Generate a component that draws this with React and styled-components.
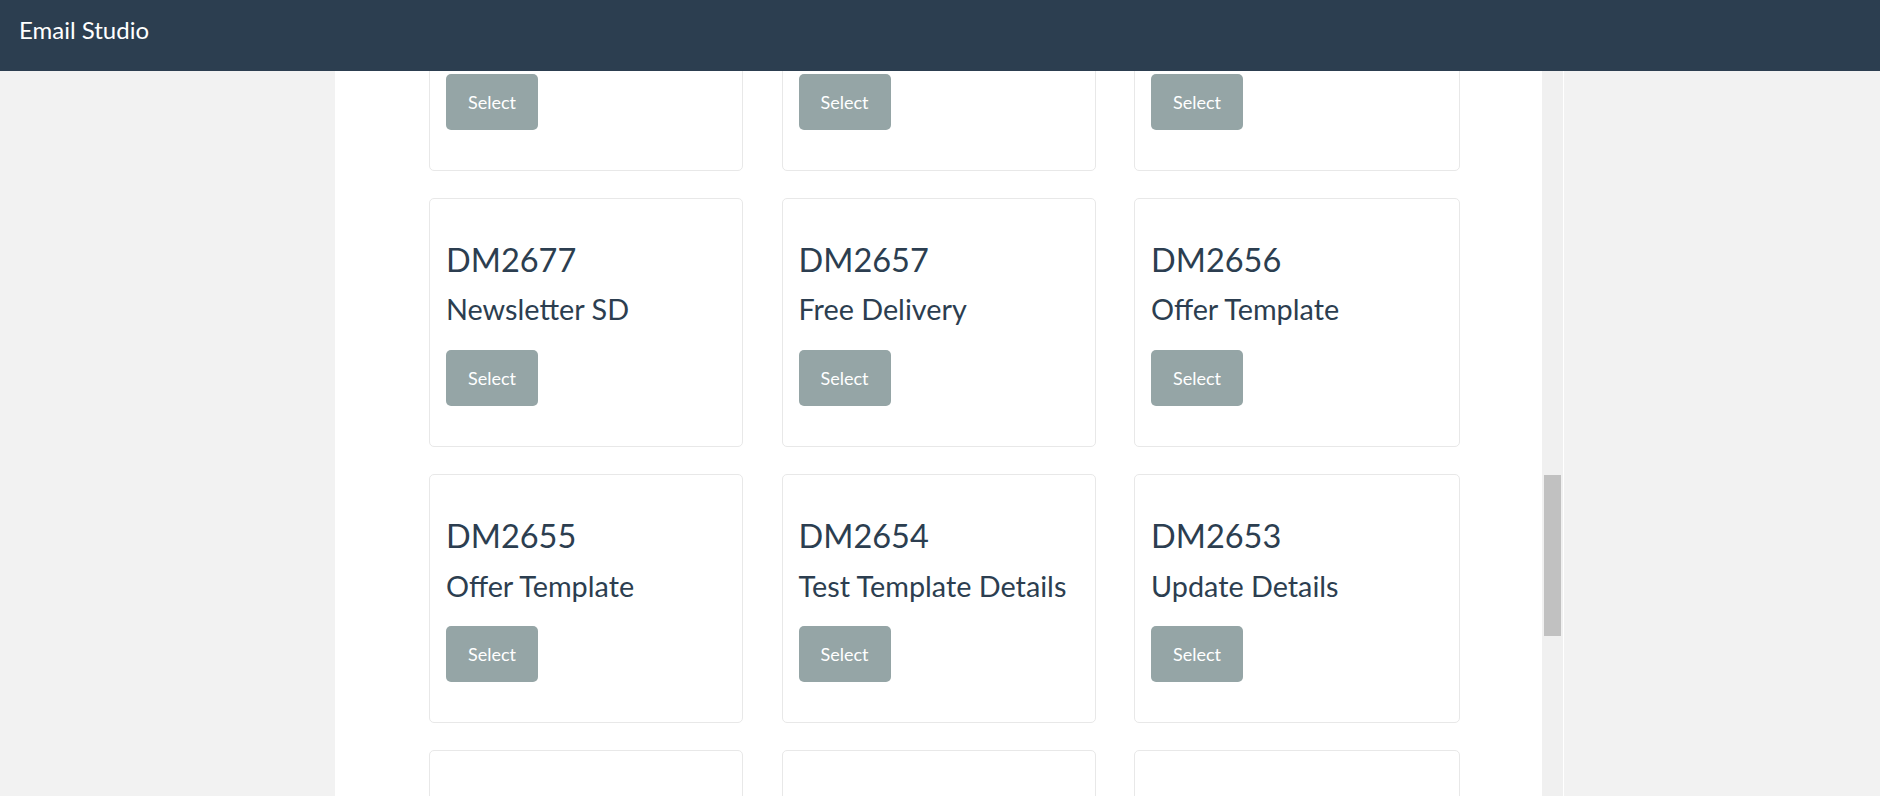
import React, { useLayoutEffect, useRef, useState } from 'react'
import styled, { createGlobalStyle } from 'styled-components'

const templates = [
  ['DM2740', 'Spring Sale'],
  ['DM2738', 'Welcome Email'],
  ['DM2735', 'Order Confirmation'],
  ['DM2731', 'Newsletter June'],
  ['DM2729', 'Abandoned Cart'],
  ['DM2724', 'Product Launch'],
  ['DM2720', 'Event Invite'],
  ['DM2716', 'Feedback Request'],
  ['DM2712', 'Loyalty Points'],
  ['DM2709', 'Summer Offer'],
  ['DM2705', 'Reminder'],
  ['DM2701', 'Newsletter May'],
  ['DM2698', 'Price Drop'],
  ['DM2695', 'Birthday Offer'],
  ['DM2692', 'Thank You'],
  ['DM2689', 'Re-engagement'],
  ['DM2686', 'Weekly Digest'],
  ['DM2683', 'Flash Sale'],
  ['DM2681', 'Newsletter April'],
  ['DM2680', 'Offer Template'],
  ['DM2678', 'Free Delivery'],
  ['DM2677', 'Newsletter SD'],
  ['DM2657', 'Free Delivery'],
  ['DM2656', 'Offer Template'],
  ['DM2655', 'Offer Template'],
  ['DM2654', 'Test Template Details'],
  ['DM2653', 'Update Details'],
  ['DM2652', 'Offer Template'],
  ['DM2651', 'Newsletter SD'],
  ['DM2650', 'Welcome Email'],
  ['DM2649', 'Test Template'],
  ['DM2648', 'Free Delivery'],
  ['DM2647', 'Offer Template']
]

const GlobalStyle = createGlobalStyle`
  html, body {
    margin: 0;
    padding: 0;
    height: 100%;
    overflow: hidden;
    background: #f2f2f2;
    font-family: Lato, "Open Sans", "Liberation Sans", sans-serif;
  }
`

const Page = styled.div`
  display: flex;
  flex-direction: column;
  height: 100vh;
`

const Header = styled.header`
  flex: 0 0 71px;
  box-sizing: border-box;
  background: #2c3e50;
  padding: 16px 19px 0;

  h1 {
    margin: 0;
    color: #fff;
    font-size: 24px;
    font-weight: 400;
    line-height: 28.8px;
  }
`

const Main = styled.main`
  flex: 1;
  min-height: 0;
  display: flex;
  padding-left: 335px;
`

const Panel = styled.section`
  display: flex;
  width: 1229px;
  box-sizing: border-box;
  height: 100%;
  background: #fff;
  border-right: 1px solid #fff;
`

const ScrollArea = styled.div`
  flex: 1;
  height: 100%;
  overflow-y: auto;
  scrollbar-width: none;

  &::-webkit-scrollbar {
    display: none;
  }
`

const ScrollTrack = styled.div`
  position: relative;
  flex: 0 0 21px;
  background: #f0f0f0;
`

const ScrollThumb = styled.div`
  position: absolute;
  left: 2px;
  right: 2px;
  background: #c1c1c1;
`

const Grid = styled.div`
  display: grid;
  grid-template-columns: 314px 314px 326px;
  column-gap: 38.5px;
  row-gap: 27px;
  padding: 13px 0 240px 94px;
`

const Card = styled.div`
  box-sizing: border-box;
  border: 1px solid #e8e8e8;
  border-radius: 5px;
  padding: 41px 16px 40px;
  color: #2c3e50;
`

const Code = styled.h2`
  margin: 0 0 15px;
  font-size: 32.5px;
  font-weight: 400;
  line-height: 39.6px;
`

const Name = styled.h3`
  margin: 0 0 24px;
  font-size: 28.8px;
  font-weight: 400;
  line-height: 1.1;
  white-space: nowrap;
`

const SelectButton = styled.button`
  display: inline-flex;
  align-items: center;
  justify-content: center;
  height: 56px;
  padding: 0 22px;
  border: 0;
  border-radius: 5px;
  background: #95a5a6;
  color: #fff;
  font-family: inherit;
  font-size: 18px;
  cursor: pointer;
`

export default function App () {
  const scrollRef = useRef(null)
  const [thumb, setThumb] = useState({ top: 0, height: 0 })

  const updateThumb = () => {
    const el = scrollRef.current
    if (!el) return
    const track = el.clientHeight
    const height = (track * track) / el.scrollHeight
    const range = el.scrollHeight - track
    const top = range > 0 ? (el.scrollTop / range) * (track - height) : 0
    setThumb({ top, height })
  }

  useLayoutEffect(() => {
    if (scrollRef.current) scrollRef.current.scrollTop = 1820
    updateThumb()
  }, [])

  return (
    <Page>
      <GlobalStyle />
      <Header>
        <h1>Email Studio</h1>
      </Header>
      <Main>
        <Panel>
          <ScrollArea ref={scrollRef} onScroll={updateThumb}>
            <Grid>
              {templates.map(([code, name]) => (
                <Card key={code + name}>
                  <Code>{code}</Code>
                  <Name>{name}</Name>
                  <SelectButton type='button'>Select</SelectButton>
                </Card>
              ))}
            </Grid>
          </ScrollArea>
          <ScrollTrack>
            <ScrollThumb style={{ top: thumb.top, height: thumb.height }} />
          </ScrollTrack>
        </Panel>
      </Main>
    </Page>
  )
}
